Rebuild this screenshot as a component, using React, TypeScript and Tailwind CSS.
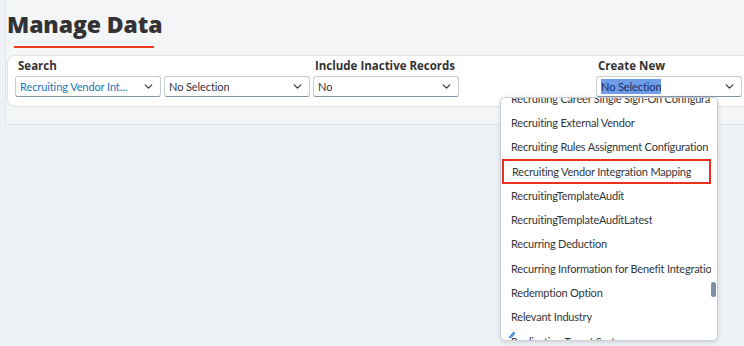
import { ChevronDown } from 'lucide-react';

const items = [
  'Recruiting Career Single Sign-On Configuration',
  'Recruiting External Vendor',
  'Recruiting Rules Assignment Configuration',
  'Recruiting Vendor Integration Mapping',
  'RecruitingTemplateAudit',
  'RecruitingTemplateAuditLatest',
  'Recurring Deduction',
  'Recurring Information for Benefit Integration',
  'Redemption Option',
  'Relevant Industry',
  'Replication Target System',
];

const body = { fontFamily: 'Lato, "Noto Sans", sans-serif' };

function Select({ value, blue, selected }: { value: string; blue?: boolean; selected?: boolean }) {
  return (
    <div className="w-[146px] h-[21px] flex items-center justify-between pl-[4px] pr-[5px] bg-white border border-[#c9ced4] border-b-[#8696a9] rounded-[3px]">
      <span
        style={body}
        className={`text-[11px] leading-[15px] tracking-[-0.1px] truncate ${
          blue ? 'text-[#1b76b8]' : selected ? 'bg-[#6f9ce6] text-[#142c66]' : 'text-[#32363a]'
        }`}
      >
        {value}
      </span>
      <ChevronDown className="w-[13px] h-[13px] text-[#32363a] shrink-0" strokeWidth={2.2} />
    </div>
  );
}

export default function App() {
  return (
    <div
      className="relative w-[744px] h-[346px] overflow-hidden bg-[#eef2f6]"
      style={{ fontFamily: '"Open Sans", "Noto Sans", sans-serif' }}
    >
      <div className="ml-[5px] h-[125px] bg-[#f3f5f7] border-l border-b border-[#dfe3e8] pt-[2px]">
        {/* Title */}
        <h1 className="pl-[1px] pt-[8px] text-[23px] leading-[28px] font-extrabold text-[#333] tracking-[-0.1px]">
          Manage Data
        </h1>
        <div className="ml-[8px] mt-[8px] w-[140px] h-[2px] bg-[#ee3a1f]" />

        {/* Filter card */}
        <div className="mt-[7px] ml-[1px] h-[52px] bg-white border border-r-0 border-[#dfe3e8] rounded-l-[8px] pl-[7px] pt-[2px] flex">
          <div className="w-[298px]">
            <div className="pl-[3px] text-[11.5px] leading-[15px] font-bold text-[#333]">Search</div>
            <div className="mt-[3px] flex gap-[3px]">
              <Select value="Recruiting Vendor Int..." blue />
              <Select value="No Selection" />
            </div>
          </div>
          <div className="w-[283px]">
            <div className="pl-[2px] text-[11.5px] leading-[15px] font-bold text-[#333]">Include Inactive Records</div>
            <div className="mt-[3px]">
              <Select value="No" />
            </div>
          </div>
          <div>
            <div className="pl-[2px] text-[11.5px] leading-[15px] font-bold text-[#333]">Create New</div>
            <div className="mt-[3px]">
              <Select value="No Selection" selected />
            </div>
          </div>
        </div>
      </div>

      {/* Dropdown list */}
      <div className="absolute left-[500px] top-[97px] w-[218px] h-[244px] bg-white border border-[#c9ced4] rounded-[5px] shadow-[0_1px_4px_rgba(0,0,0,0.15)] overflow-hidden">
        <div className="mt-[-12px]">
          {items.map((item, i) => (
            <div key={item} className="h-[24.3px] flex items-center pl-[10px] pr-[6px]">
              <div
                className={`h-[25px] flex items-center ${
                  i === 3 ? 'border-2 border-[#e8321e] -ml-[9px] pl-[8px] w-[210px]' : 'w-full'
                }`}
              >
                <span
                  style={body}
                  className="text-[11px] leading-[15px] tracking-[-0.2px] text-[#32363a] whitespace-nowrap overflow-hidden"
                >
                  {item}
                </span>
              </div>
            </div>
          ))}
        </div>
        <div className="absolute right-[1px] top-[184px] w-[5px] h-[15px] rounded-full bg-[#7c8ea6]" />
        <svg className="absolute left-[7px] bottom-[1px]" width="8" height="8" viewBox="0 0 8 8">
          <path d="M1 7 L6 1 M3 7 L7 2" stroke="#3b7fd1" strokeWidth="1.2" fill="none" />
        </svg>
      </div>
    </div>
  );
}
